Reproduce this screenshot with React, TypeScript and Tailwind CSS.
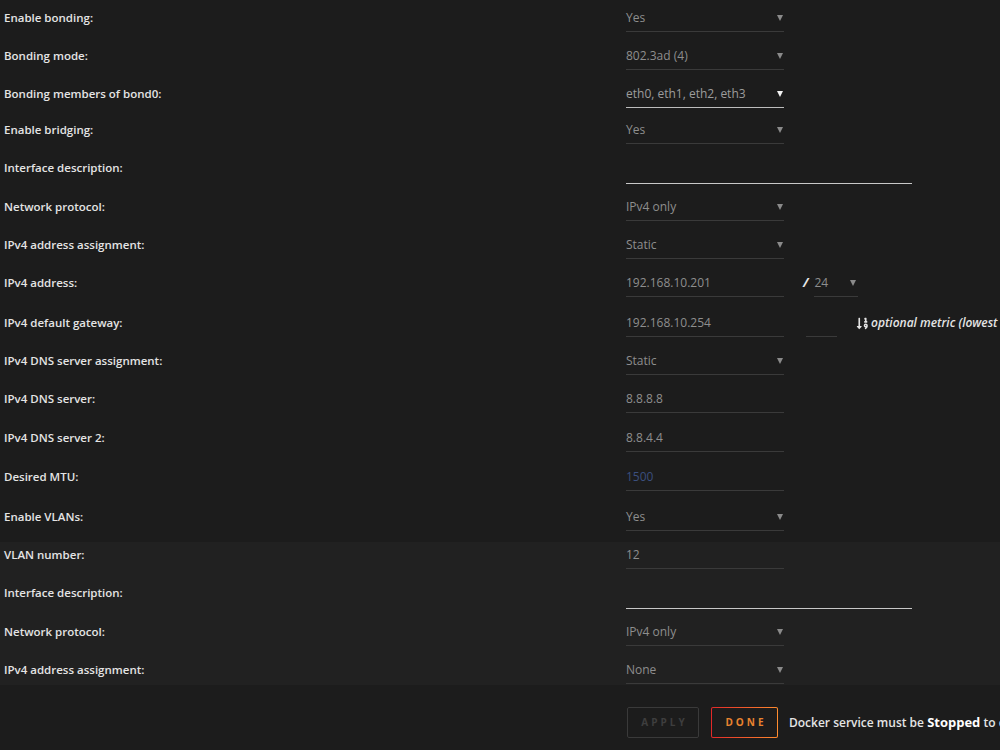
import React from "react";
import { FaSortNumericDown } from "react-icons/fa";

const font = { fontFamily: '"Open Sans", "Noto Sans", sans-serif' };

function Arrow({ bright }: { bright?: boolean }) {
  return (
    <span
      className={`ml-auto mr-[1px] inline-block h-0 w-0 border-x-[3px] border-t-[6px] border-x-transparent ${
        bright ? "border-t-[#f2f2f2]" : "border-t-[#8a8a8a]"
      }`}
    />
  );
}

function Field({
  value,
  select,
  active,
  placeholder,
}: {
  value?: string;
  select?: boolean;
  active?: boolean;
  placeholder?: string;
}) {
  return (
    <div
      className={`mt-[1px] flex h-[26px] w-[158px] shrink-0 items-center border-b ${
        active ? "border-[#bdbdbd]" : "border-[#3a3a3a]"
      }`}
    >
      {placeholder ? (
        <span className="text-[12px] text-[#3b4f7e]">{placeholder}</span>
      ) : (
        <span className={`text-[12px] ${active ? "text-[#9c9c9c]" : "text-[#8e8e8e]"}`}>{value}</span>
      )}
      {select && <Arrow bright={active} />}
    </div>
  );
}

function WideField() {
  return <div className="mt-[11px] h-[24px] w-[286px] shrink-0 self-start border-b border-[#c8c8c8]" />;
}

const heights: Record<number, string> = {
  36: "h-[36px]",
  38: "h-[38px]",
  39: "h-[39px]",
  40: "h-[40px]",
};

function Row({ label, h, children }: { label: string; h: number; children: React.ReactNode }) {
  return (
    <div className={`${heights[h]} overflow-hidden`}>
      <div className="flex h-[38px] items-center">
        <div className="w-[626px] shrink-0 self-center pl-[4px] text-[11.5px] font-semibold text-[#e4e4e4]">
          {label}
        </div>
        {children}
      </div>
    </div>
  );
}

export default function App() {
  return (
    <div className="h-[750px] w-[1000px] overflow-hidden bg-[#1c1c1c]" style={font}>
      <div className="-mt-[1px]">
        <Row h={38} label="Enable bonding:">
          <Field value="Yes" select />
        </Row>
        <Row h={38} label="Bonding mode:">
          <Field value="802.3ad (4)" select />
        </Row>
        <Row h={36} label="Bonding members of bond0:">
          <Field value="eth0, eth1, eth2, eth3" select active />
        </Row>
        <Row h={38} label="Enable bridging:">
          <Field value="Yes" select />
        </Row>
        <Row h={39} label="Interface description:">
          <WideField />
        </Row>
        <Row h={38} label="Network protocol:">
          <Field value="IPv4 only" select />
        </Row>
        <Row h={38} label="IPv4 address assignment:">
          <Field value="Static" select />
        </Row>
        <Row h={40} label="IPv4 address:">
          <Field value="192.168.10.201" />
          <span className="ml-[19px] mr-[6px] shrink-0 text-[13px] font-bold italic text-[#e8e8e8]">/</span>
          <div className="mt-[1px] flex h-[26px] w-[44px] shrink-0 items-center border-b border-[#3a3a3a]">
            <span className="text-[12px] text-[#8e8e8e]">24</span>
            <span className="ml-auto mr-[2px] inline-block h-0 w-0 border-x-[3px] border-t-[6px] border-x-transparent border-t-[#8a8a8a]" />
          </div>
        </Row>
        <Row h={38} label="IPv4 default gateway:">
          <Field value="192.168.10.254" />
          <div className="ml-[22px] mt-[2px] h-[26px] w-[31px] shrink-0 border-b border-[#3a3a3a]" />
          <FaSortNumericDown className="ml-[19px] shrink-0 text-[13px] text-[#e4e4e4]" />
          <span className="ml-[2px] shrink-0 whitespace-nowrap text-[12px] font-semibold italic text-[#e4e4e4]">
            optional metric (lowest is preferred, 0 is default)
          </span>
        </Row>
        <Row h={38} label="IPv4 DNS server assignment:">
          <Field value="Static" select />
        </Row>
        <Row h={39} label="IPv4 DNS server:">
          <Field value="8.8.8.8" />
        </Row>
        <Row h={39} label="IPv4 DNS server 2:">
          <Field value="8.8.4.4" />
        </Row>
        <Row h={40} label="Desired MTU:">
          <Field placeholder="1500" />
        </Row>
        <Row h={38} label="Enable VLANs:">
          <Field value="Yes" select />
        </Row>
        <div className="bg-[linear-gradient(to_bottom,transparent_6px,#212121_6px,#212121_149px,transparent_149px)]">
          <Row h={38} label="VLAN number:">
            <Field value="12" />
          </Row>
          <Row h={39} label="Interface description:">
            <WideField />
          </Row>
          <Row h={38} label="Network protocol:">
            <Field value="IPv4 only" select />
          </Row>
          <Row h={38} label="IPv4 address assignment:">
            <Field value="None" select />
          </Row>
        </div>
      </div>
      <div className="mt-[18px] flex items-center overflow-hidden pl-[627px]">
        <button className="h-[31px] w-[72px] shrink-0 rounded-[2px] border border-[#3a3a3a] pl-[3px] text-[10px] font-bold tracking-[3px] text-[#3e3e3e]">
          APPLY
        </button>
        <div className="ml-[12px] h-[31px] w-[67px] shrink-0 rounded-[2px] bg-[linear-gradient(to_right,#e22828,#ff8c2f)] p-[1px]">
          <div className="flex h-full w-full items-center justify-center rounded-[1px] bg-[#1c1c1c] pl-[3px] text-[10px] font-bold tracking-[3px] text-[#e8832f]">
            DONE
          </div>
        </div>
        <span className="ml-[11px] shrink-0 whitespace-nowrap text-[12px] font-semibold text-[#e4e4e4]">
          Docker service must be <span className="text-[13px] font-bold text-white">Stopped</span> to change
        </span>
      </div>
    </div>
  );
}
